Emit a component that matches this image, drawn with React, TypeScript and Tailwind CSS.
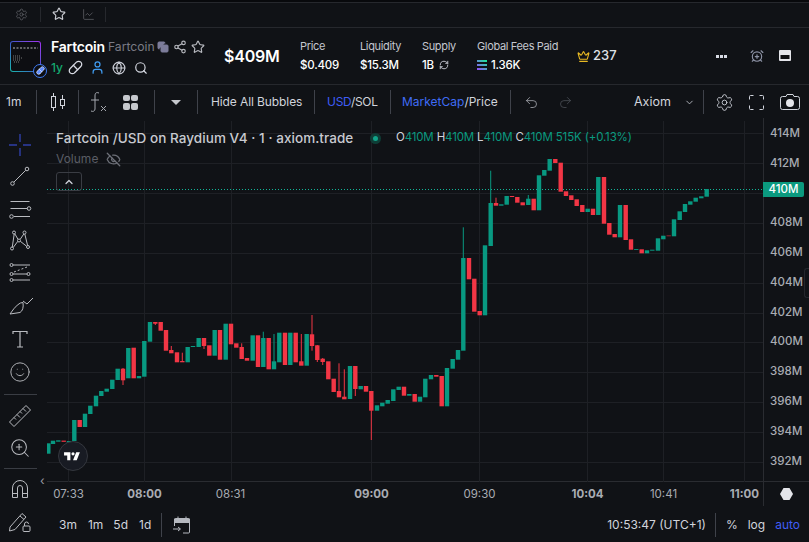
import {
  AlarmClockPlus,
  ChartLine,
  ChevronDown,
  ChevronUp,
  Copy,
  Crown,
  EyeOff,
  Globe,
  Pill,
  RefreshCw,
  Redo2,
  Search,
  Settings,
  Share2,
  Smile,
  Star,
  Undo2,
  User,
  ZoomIn,
} from 'lucide-react';

const G = '#089981';
const R = '#f23645';

// x, body top, body bottom, colour, wick top, wick bottom
type Candle = [number, number, number, string, number?, number?];

const candles: Candle[] = [
  [48.3, 443.3, 453.7, G], [53, 440.7, 444, G], [58.3, 440.3, 441.7, G], [63.7, 440.6, 441.8, R], [69, 441, 443, G],
  [74.3, 420, 441, G], [79.7, 420, 427, R], [85, 413.7, 427, G], [90.3, 405.7, 414, G], [96, 395.7, 406.3, G],
  [101.3, 391, 396, G], [106.7, 388.7, 391.7, G], [112.3, 379.7, 389, G], [117.7, 368.7, 380, G], [123, 368.7, 380.3, R, 368, 385],
  [128.3, 348, 378.3, G], [133.7, 347.7, 378.3, R], [139, 376, 378.3, G], [144.3, 341, 376.7, G], [150, 322, 341.7, G],
  [155.3, 322, 323.7, R, 322, 325], [160.7, 322, 330.7, R], [166, 330, 350.7, R], [171.3, 350, 353.3, R, 346, 353], [177, 352.3, 362.3, R],
  [182.3, 361, 362.3, R, 352.7, 362], [187.7, 347, 362.3, G], [193, 346, 347, G], [198.7, 338, 347, G], [204, 338, 346, R, 338, 349],
  [209.3, 345.3, 355.7, R], [214.7, 330, 355.7, G], [220, 330, 359.7, R], [225.7, 323.7, 359.7, G], [231, 323.7, 344.3, R],
  [236.3, 343.3, 347.7, R], [241.7, 347, 359, R, 343.3, 359], [247, 358, 360.7, R], [252.7, 335.3, 360.7, G], [258, 335.3, 367, R],
  [263.3, 338, 367, G, 331.7, 367], [268.7, 338, 369.3, R], [274, 361.3, 369.3, G, 334, 369], [279.3, 332.7, 362.3, G], [285, 332.7, 365, R],
  [290.3, 332.7, 365, G], [295.7, 332.7, 362.3, R], [301.3, 361.3, 365.7, R, 334, 365], [306.7, 334, 365.7, G], [312, 334.3, 346, R, 315, 350.7],
  [317.3, 345.3, 360, R, 345, 362], [322.7, 358.7, 362, R, 358, 365], [328.3, 361.3, 379.3, R], [333.7, 378.7, 392, R], [339, 391, 397.3, R, 363.3, 397],
  [344.3, 396.7, 399.3, R, 369.3, 399], [350, 366, 399, G], [355.3, 366, 389, R, 366, 396], [360.7, 386, 389.3, G], [366, 386, 391.7, R],
  [371.3, 391, 410.7, R, 391, 440], [377, 405.3, 410.7, G], [382.3, 402.7, 406.3, G], [387.7, 400, 403.7, G], [393.3, 389.3, 401, G],
  [398.7, 386.7, 390, G], [404, 386.7, 395.7, R], [409.3, 394, 395.7, G], [414.7, 394, 401.7, R], [420, 396.7, 401.7, G],
  [425.3, 378.7, 397.3, G], [431, 375, 379.3, G], [436.3, 375, 376.7, R], [441.7, 376, 406.3, R], [447, 368, 406.3, G],
  [452.7, 359, 368.7, G], [458, 350, 359.7, G], [463.3, 258, 350.7, G, 227.3, 350], [469, 258, 279.3, R], [474.3, 278.7, 311.7, R],
  [479.7, 311, 315.3, R], [485, 245.3, 315.3, G], [490.7, 203, 246, G, 170.7, 246], [496, 203, 205.7, R, 197.7, 205], [501.3, 204.3, 205.7, G],
  [506.7, 196, 204.7, G], [512, 196, 197, R], [517.3, 197, 202.7, R], [522.7, 202.3, 205.3, R], [528.3, 198.7, 205, G, 195, 205],
  [533.7, 198.7, 210.3, R], [539, 175.3, 210.3, G], [544.3, 170, 175.7, G], [549.7, 159, 170.7, G], [555.3, 159, 163, R],
  [560.7, 162.7, 191.7, R], [566, 191.3, 196, R], [571.3, 195.3, 200, R], [576.7, 199.3, 206, R], [582.3, 205, 212, R],
  [587.7, 208.7, 212, G], [593, 208.7, 215, R], [598.3, 177, 215, G], [604, 177, 223.7, R], [609.3, 223, 234.7, R],
  [614.7, 234, 237.3, R], [620, 205, 237.3, G], [625.7, 205, 240, R], [631, 239.3, 249.7, R], [636.3, 249, 249.9, G],
  [641.7, 249.3, 253.3, R], [647, 250.3, 253.3, G], [652.3, 249.7, 250.7, G], [658, 238.3, 250.7, G], [663.3, 235.7, 239.3, G],
  [668.7, 235.3, 236.3, '#8f2631'], [674, 219.3, 236.3, G], [679.7, 211.3, 220, G], [685, 204, 212, G], [690.3, 201.3, 204.7, G],
  [695.7, 197.7, 201.7, G], [701.3, 196.3, 198.3, G], [706.7, 189, 196.7, G],
];

const gridY = [133.5, 163.5, 193.5, 223.5, 253.5, 283.5, 313.5, 342.5, 372.5, 402.5, 432.5, 462.5];
const gridX = [68.5, 144.5, 231.5, 371.5, 479.5, 587.5, 663.5, 744.5];

const prices = ['414M', '412M', '', '408M', '406M', '404M', '402M', '400M', '398M', '396M', '394M', '392M'];

const times = [
  { label: '07:33', x: 21.5 },
  { label: '08:00', x: 97.5, bold: true },
  { label: '08:31', x: 183.5 },
  { label: '09:00', x: 324.5, bold: true },
  { label: '09:30', x: 432.5 },
  { label: '10:04', x: 540.5, bold: true },
  { label: '10:41', x: 616.5 },
  { label: '11:00', x: 697.5, bold: true },
];

const Sep = () => <div className="h-[24px] w-px shrink-0 bg-[#3f424a]" />;

const Chart = () => (
  <svg viewBox="47 118 716 364" className="block h-[364px] w-[716px]">
    {gridY.map((y) => (
      <line key={y} x1={47} x2={763} y1={y} y2={y} stroke="#1e2025" />
    ))}
    {gridX.map((x) => (
      <line key={x} x1={x} x2={x} y1={121} y2={482} stroke="#1e2025" />
    ))}
    <line x1={47} x2={763} y1={189.5} y2={189.5} stroke="#12b598" strokeDasharray="1 2" />
    {candles.map(([x, top, bottom, color, wickTop, wickBottom]) => (
      <g key={x}>
        {wickTop !== undefined && (
          <rect x={x - 0.5} y={wickTop} width={1} height={(wickBottom ?? bottom) - wickTop} fill={color} />
        )}
        <rect x={x - 2.2} y={top} width={4.4} height={bottom - top} fill={color} />
      </g>
    ))}
  </svg>
);

const Tool = ({ children }: { children: React.ReactNode }) => (
  <div className="flex h-[32px] w-full items-center justify-center text-[#b9bbc0]">{children}</div>
);

const LeftTools = () => (
  <div className="flex w-[47px] shrink-0 flex-col items-center pt-[11px] pr-[7px]">
    <Tool>
      <svg width="22" height="22" viewBox="0 0 22 22" stroke="#2f3fa8" strokeWidth="1.4">
        <path d="M11 0v8M11 14v8M0 11h8M14 11h8" />
      </svg>
    </Tool>
    <Tool>
      <svg width="22" height="22" viewBox="0 0 22 22" fill="none" stroke="currentColor">
        <circle cx="18" cy="3" r="1.8" />
        <circle cx="3.5" cy="17.5" r="1.8" />
        <path d="M16.700 4.300 4.800 16.200" />
      </svg>
    </Tool>
    <Tool>
      <svg width="24" height="22" viewBox="0 0 24 22" fill="none" stroke="currentColor">
        <path d="M2.5 3.5h19M2.5 10.500h17M6 18.500h16" />
        <circle cx="21" cy="10.500" r="1.800" />
        <circle cx="3.500" cy="18.500" r="1.800" />
      </svg>
    </Tool>
    <Tool>
      <svg width="24" height="24" viewBox="0 0 24 24" fill="none" stroke="currentColor">
        <circle cx="6" cy="3.500" r="1.500" />
        <circle cx="16.500" cy="3.500" r="1.500" />
        <circle cx="11" cy="11.500" r="1.500" />
        <circle cx="4" cy="19.500" r="1.500" />
        <circle cx="20" cy="18" r="1.500" />
        <path d="M6.200 5 4.300 18M6.800 4.800 10 10.300M15.800 5 12.200 10.300M16.800 5 19.600 16.500M9.800 12.300 5.200 18.500M12.300 12.300 18.700 17.300" />
      </svg>
    </Tool>
    <Tool>
      <svg width="24" height="22" viewBox="0 0 24 22" fill="none" stroke="currentColor">
        <circle cx="3.500" cy="3" r="1.500" />
        <circle cx="3.500" cy="12" r="1.500" />
        <circle cx="20.500" cy="12" r="1.500" />
        <circle cx="3.500" cy="18" r="1.500" />
        <path d="M5 3h17M5 12h14M5 18h17" />
        <path d="M6 10 19 5" strokeDasharray="2 2" />
      </svg>
    </Tool>
    <div className="mt-[2px]">
      <Tool>
        <svg width="24" height="20" viewBox="0 0 24 20" fill="none" stroke="currentColor" className="ml-[2px]">
          <path d="M1 17 11 15.500Q15 13 14 5.500 9 5 1 17Z" />
          <path d="M14 4l4 3 6-6" />
        </svg>
      </Tool>
    </div>
    <Tool>
      <svg width="16" height="18" viewBox="0 0 16 18" fill="none" stroke="currentColor" strokeWidth="1.200">
        <path d="M1 4V1.500h14V4M8 1.500V17M5 17h6" />
      </svg>
    </Tool>
    <div className="mt-[1px]">
      <Tool>
        <Smile size={22} strokeWidth={1} />
      </Tool>
    </div>
    <div className="mb-[5px] mt-[6px] h-px w-[33px] bg-[#3a3d44]" />
    <Tool>
      <svg width="24" height="24" viewBox="0 0 24 24" fill="none" stroke="currentColor">
        <path d="M1.500 18 18 1.500l4.500 4.500L6 22.500Z" />
        <path d="M6 13.500l2 2M9 10.500l3 3M12 7.500l2 2M15 4.500l3 3" />
      </svg>
    </Tool>
    <Tool>
      <ZoomIn size={22} strokeWidth={1.100} />
    </Tool>
    <div className="my-[4px] h-px w-[33px] bg-[#3a3d44]" />
    <Tool>
      <svg width="16" height="18" viewBox="0 0 16 18" fill="none" stroke="currentColor">
        <path d="M.5 17.500V8a7.500 7.500 0 0 1 15 0v9.500h-5V8a2.500 2.500 0 0 0-5 0v9.500Z" />
        <path d="M.5 13.500h5M10.500 13.500h5" />
      </svg>
    </Tool>
    <Tool>
      <svg width="24" height="24" viewBox="0 0 24 24" fill="none" stroke="currentColor">
        <path d="M2 18 14 4.500l4 3.500L7 20.500l-5.500 1.500Z" />
        <path d="M12 7l4 3.500" />
        <rect x="15" y="17" width="7" height="5.500" rx="1" />
        <path d="M16.500 17v-2a2 2 0 0 1 4 0" />
      </svg>
    </Tool>
  </div>
);

const Stat = ({ label, value, className }: { label: string; value: React.ReactNode; className: string }) => (
  <div className={`flex flex-col gap-[4px] ${className}`}>
    <span className="text-[11px] leading-[14px] tracking-[-0.35px] text-[#c4c7cf]">{label}</span>
    <span className="text-[11.500px] font-medium leading-[16px] tracking-[-0.2px] text-white">{value}</span>
  </div>
);

const Header = () => (
  <div className="flex h-[57px] items-center border-b border-[#26282d] pl-[10px] text-white">
    <div className="relative h-[31px] w-[31px] rounded-[3px] bg-gradient-to-tr from-[#16b6a8] via-[#3b55c9] to-[#a22cf0] p-px">
      <div className="h-full w-full rounded-[2px] bg-[#0d0e12]">
        <svg width="29" height="29" viewBox="0 0 29 29">
          <path d="M2 6h25" stroke="#b8b8b8" strokeDasharray="2 1.500" />
          <path d="M2 14h8M2 16h9M2 18h8M3 20h6" stroke="#777" strokeDasharray="1 1" />
        </svg>
      </div>
      <div className="absolute left-[23px] top-[23px] flex h-[14px] w-[14px] items-center justify-center rounded-full border border-[#3f7cf5] bg-[#0d0e12]">
        <Pill size={9} className="fill-[#5f8dff] text-[#dfe7ff]" />
      </div>
    </div>
    <div className="ml-[10px] flex w-[173px] shrink-0 flex-col gap-[3px]">
      <div className="flex items-center">
        <span className="text-[14px] font-semibold leading-[20px] tracking-[-0.2px]">Fartcoin</span>
        <span className="ml-[3px] text-[12.200px] leading-[20px] text-[#7a7b85]">Fartcoin</span>
        <Copy size={12} className="ml-[2px] fill-[#7c7c9a] text-[#7c7c9a]" />
        <Share2 size={14} className="ml-[4px] text-[#b5b7bd]" />
        <Star size={14} className="ml-[4px] text-[#b5b7bd]" />
      </div>
      <div className="flex items-center">
        <span className="w-[17px] text-[12px] font-medium leading-[16px] text-[#14a86f]">1y</span>
        <Pill size={15} className="text-[#d8dbe4]" />
        <User size={15} className="ml-[7px] text-[#3f9bf0]" />
        <Globe size={14} className="ml-[7px] text-[#c8cbd4]" />
        <Search size={14} className="ml-[8px] text-[#d8dbe4]" />
      </div>
    </div>
    <span className="w-[76px] shrink-0 text-[16px] font-semibold tracking-[-0.2px]">$409M</span>
    <Stat className="w-[60px]" label="Price" value="$0.409" />
    <Stat className="w-[62px]" label="Liquidity" value="$15.3M" />
    <Stat
      className="w-[55px]"
      label="Supply"
      value={
        <span className="flex items-center gap-[5px]">
          1B <RefreshCw size={10} className="text-[#d8dbe4]" />
        </span>
      }
    />
    <Stat
      className="w-[100px]"
      label="Global Fees Paid"
      value={
        <span className="flex items-center gap-[4px]">
          <svg width="10" height="10" viewBox="0 0 10 10">
            <defs>
              <linearGradient id="sol" x1="0" y1="1" x2="1" y2="0">
                <stop offset="0" stopColor="#9945ff" />
                <stop offset="1" stopColor="#14f195" />
              </linearGradient>
            </defs>
            <path d="M0 0h10v2H0zM0 4h10v2H0zM0 8h10v2H0z" fill="url(#sol)" />
          </svg>
          1.36K
        </span>
      }
    />
    <Crown size={13} className="text-[#e8b923]" />
    <span className="ml-[3px] text-[13px] font-medium text-[#dfe1e6]">237</span>
    <div className="flex-1" />
    <div className="flex gap-[1px]">
      <span className="h-[3px] w-[3px] bg-[#d8dbe4]" />
      <span className="h-[3px] w-[3px] bg-[#d8dbe4]" />
      <span className="h-[3px] w-[3px] bg-[#d8dbe4]" />
    </div>
    <AlarmClockPlus size={14} className="ml-[23px] text-[#8d93a6]" />
    <svg width="12" height="12" viewBox="0 0 12 12" className="ml-[15px] mr-[18px]">
      <rect width="12" height="11" rx="1" fill="#e4e5ea" />
      <rect x="1.500" y="5" width="9" height="4" fill="#0d0e12" />
    </svg>
  </div>
);

const Toolbar = () => (
  <div className="flex h-[33px] items-center pt-[1px] text-[12px] leading-none text-[#d1d4dc]">
    <div className="flex w-[36px] shrink-0 pl-[6px]">1m</div>
    <Sep />
    <div className="flex w-[41px] shrink-0 justify-center">
      <svg width="20" height="20" viewBox="0 0 20 20" fill="none" stroke="currentColor">
        <rect x="3.500" y="4.500" width="4" height="11" />
        <path d="M5.500 1v3.500M5.500 15.500V19" />
        <rect x="12.500" y="7.500" width="4" height="6" />
        <path d="M14.500 3v4.500M14.500 13.500V17" />
      </svg>
    </div>
    <Sep />
    <div className="flex w-[75px] shrink-0 items-center">
      <svg width="20" height="22" viewBox="0 0 20 22" fill="none" stroke="#a5a8af" className="ml-[10px]">
        <path d="M2 9h8M10 2c-3-1-4 0-4 3v13c0 2-2 3-4 2" />
        <path d="M12 15l5 5M17 15l-5 5" />
      </svg>
      <div className="ml-[14px] grid h-[15px] w-[15px] grid-cols-2 gap-[1.500px]">
        <span className="rounded-[2px] bg-[#c6c8cd]" />
        <span className="rounded-[2px] bg-[#c6c8cd]" />
        <span className="rounded-[2px] bg-[#c6c8cd]" />
        <span className="rounded-[2px] bg-[#c6c8cd]" />
      </div>
    </div>
    <Sep />
    <div className="flex w-[42px] shrink-0 justify-center">
      <div className="h-0 w-0 border-x-[5.500px] border-t-[5.500px] border-x-transparent border-t-[#c6c8cd]" />
    </div>
    <Sep />
    <div className="w-[116px] shrink-0 pl-[13px] tracking-[-0.1px]">Hide All Bubbles</div>
    <Sep />
    <div className="w-[75px] shrink-0 pl-[12px] tracking-[-0.3px]">
      <span className="text-[#3f5df5]">USD</span>/SOL
    </div>
    <Sep />
    <div className="w-[119px] shrink-0 pl-[11px]">
      <span className="text-[#3f6cf5]">MarketCap</span>/Price
    </div>
    <Sep />
    <Undo2 size={15} strokeWidth={1.300} className="ml-[13px] text-[#a5a8af]" />
    <Redo2 size={15} strokeWidth={1.300} className="ml-[19px] text-[#4a4d55]" />
    <span className="ml-[61px] w-[35px] text-[12.500px]">Axiom</span>
    <ChevronDown size={11} className="ml-[15px] text-[#b5b8bf]" />
    <div className="ml-[8px]">
      <Sep />
    </div>
    <Settings size={19} strokeWidth={1.100} className="ml-[11px]" />
    <svg width="15" height="15" viewBox="0 0 15 15" fill="none" stroke="currentColor" className="ml-[15px]">
      <path d="M.5 4.500V1.500a1 1 0 0 1 1-1h3M10.500.5h3a1 1 0 0 1 1 1v3M.5 10.500v3a1 1 0 0 0 1 1h3M10.500 14.500h3a1 1 0 0 0 1-1v-3" />
    </svg>
    <svg width="20" height="17" viewBox="0 0 20 17" className="ml-[16px]">
      <path d="M6 2.500 7 .5h6l1 2h3.500a2 2 0 0 1 2 2v9a2 2 0 0 1-2 2h-15a2 2 0 0 1-2-2v-9a2 2 0 0 1 2-2Z" fill="none" stroke="#d1d4dc" />
      <circle cx="10" cy="9" r="4" fill="#e4e5ea" />
    </svg>
  </div>
);

const Legend = () => (
  <div className="absolute left-[9px] top-[12px] text-[#d1d4dc]">
    <div className="flex h-[16px] items-center">
      <span className="w-[318px] text-[13.500px] font-medium tracking-[0.05px] text-[#c8cad0]">Fartcoin /USD on Raydium V4 · 1 · axiom.trade</span>
      <span className="ml-[-4px] flex h-[11px] w-[11px] items-center justify-center rounded-full bg-[#0f3d36]">
        <span className="h-[5px] w-[5px] rounded-full bg-[#12a389]" />
      </span>
      <span className="ml-[15px] text-[11.500px] tracking-[-0.15px] text-[#0a9a80]">
        <span className="text-[#d1d4dc]">O</span>410M <span className="text-[#d1d4dc]">H</span>410M{' '}
        <span className="text-[#d1d4dc]">L</span>410M <span className="text-[#d1d4dc]">C</span>410M 515K (+0.13%)
      </span>
    </div>
    <div className="mt-[5px] flex h-[16px] items-center text-[12px] text-[#5a5d65]">
      Volume
      <EyeOff size={15} className="ml-[8px] text-[#6d7078]" />
    </div>
    <div className="mt-[5px] flex h-[19px] w-[26px] items-center justify-center rounded-[3px] border border-[#3a3d44]">
      <ChevronUp size={12} strokeWidth={2.500} className="text-[#d1d4dc]" />
    </div>
  </div>
);

export default function App() {
  return (
    <div
      className="flex h-[542px] w-[809px] flex-col overflow-hidden bg-[#101216]"
      style={{ fontFamily: 'Inter, "Liberation Sans", sans-serif' }}
    >
      <div className="h-[3px] border-b border-[#26282d] bg-[#08090c]" />
      <div className="flex h-[25px] items-center border-b border-[#26282d] pb-[2px]">
        <div className="flex h-[15px] w-[41px] items-center justify-center border-r border-[#26282d]">
          <Settings size={13} strokeWidth={1.200} className="ml-[3px] text-[#6e7076]" />
        </div>
        <div className="flex w-[36px] justify-center">
          <Star size={14} className="text-[#c8cad0]" />
        </div>
        <div className="flex h-[15px] w-[29px] items-center border-r border-[#26282d]">
          <ChartLine size={13} strokeWidth={1.200} className="ml-[5px] text-[#6e7076]" />
        </div>
      </div>
      <Header />
      <Toolbar />
      <div className="flex flex-1">
        <LeftTools />
        <div className="flex flex-1 flex-col">
          <div className="relative flex h-[364px] border-b border-[#2a2c31]">
            <div className="relative h-full w-[716px] shrink-0">
              <Chart />
              <Legend />
              <div className="absolute left-[10.500px] top-[323px] flex h-[30px] w-[30px] items-center justify-center rounded-full border border-[#34373e] bg-[#181b23]">
                <svg width="19" height="15" viewBox="0 0 36 28" fill="white">
                  <path d="M14 6H2v6h6v9h6V6zm12 15h-7l6-15h7l-6 15zm-7-9a3 3 0 1 0 0-6 3 3 0 0 0 0 6z" />
                </svg>
              </div>
              <span className="absolute bottom-[-6px] left-[-7px] text-[12px] leading-none text-[#9a9ca2]">‹</span>
            </div>
            <div className="flex flex-1 flex-col border-l border-[#2a2c31] pl-[6px] pt-[0.500px] text-[11.500px] font-medium text-[#a9acb3]">
              {prices.map((p, i) => (
                <div key={i} className="flex h-[29.800px] items-center">
                  {p}
                </div>
              ))}
            </div>
            <div className="absolute left-[716px] top-[64px] flex h-[15px] w-[41px] items-center justify-center rounded-r-[2px] bg-[#0b9a7f] text-[11.500px] font-medium text-white">
              410M
            </div>
            <div className="absolute right-0 top-[150px] h-[30px] w-[5px] rounded-l-[3px] border border-r-0 border-[#24262c]" />
          </div>
          <div className="flex h-[24px]">
            <div className="relative w-[716px] shrink-0 text-[11.500px] text-[#a9acb3]">
              {times.map((t) => (
                <span
                  key={t.label}
                  className={t.bold ? 'absolute top-[5px] -translate-x-1/2 font-bold leading-[15px]' : 'absolute top-[5px] -translate-x-1/2 leading-[15px]'}
                  style={{ left: t.x }}
                >
                  {t.label}
                </span>
              ))}
            </div>
            <div className="flex flex-1 items-center justify-center border-l border-[#2a2c31] px-px">
              <svg width="13" height="12" viewBox="0 0 13 12" fill="#e4e5ea">
                <path d="M3.500 0h6L13 6l-3.500 6h-6L0 6Z" />
              </svg>
            </div>
          </div>
          <div className="flex flex-1 items-center pt-[2px] text-[12px] text-[#d1d4dc]">
            <span className="ml-[12px]">3m</span>
            <span className="ml-[11px]">1m</span>
            <span className="ml-[10px]">5d</span>
            <span className="ml-[11px]">1d</span>
            <div className="ml-[10px]">
              <Sep />
            </div>
            <svg width="18" height="18" viewBox="0 0 18 18" fill="none" stroke="#b5b8bf" className="ml-[11px]">
              <path d="M1.500 10V3.500a1 1 0 0 1 1-1h13a1 1 0 0 1 1 1V16a1 1 0 0 1-1 1H10" />
              <path d="M1.500 6.500h15V3h-15Z" fill="#b5b8bf" />
              <path d="M5 .5v2M13 .5v2M0 13h7M5 11l2.500 2L5 15" />
            </svg>
            <div className="flex-1" />
            <span>10:53:47 (UTC+1)</span>
            <div className="ml-[9px]">
              <Sep />
            </div>
            <span className="ml-[10px]">%</span>
            <span className="ml-[10px]">log</span>
            <span className="ml-[10px] mr-[9px] text-[#3f5df5]">auto</span>
          </div>
        </div>
      </div>
    </div>
  );
}
